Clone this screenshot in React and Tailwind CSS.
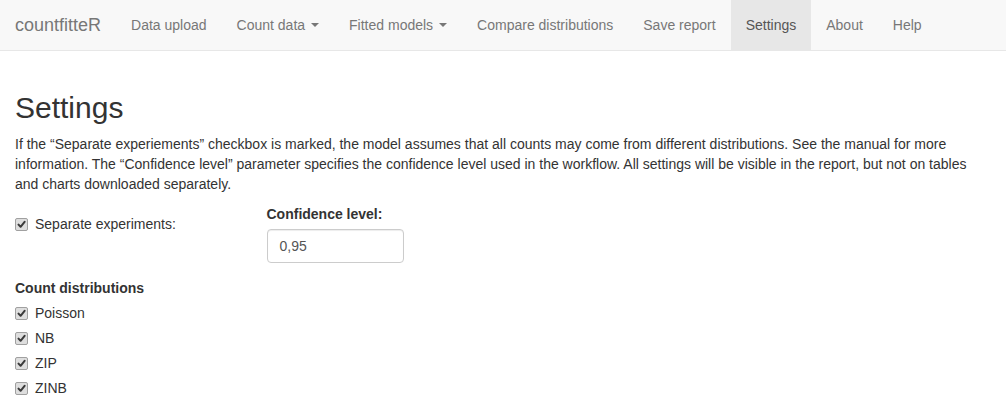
import React from "react";

function Caret() {
  return (
    <span className="ml-[6px] inline-block align-middle w-0 h-0 border-t-[4px] border-t-[#777] border-l-[4px] border-l-transparent border-r-[4px] border-r-transparent" />
  );
}

function Check() {
  return (
    <span className="relative inline-flex items-center justify-center w-[13px] h-[13px] rounded-[2px] border border-[#a0a0a0] bg-[#dedede] shrink-0">
      <svg width="9" height="9" viewBox="0 0 9 9">
        <path d="M1.5 4.6 L3.6 6.8 L7.6 1.8" fill="none" stroke="#3a3a3a" strokeWidth="2" strokeLinecap="round" strokeLinejoin="round" />
      </svg>
    </span>
  );
}

function CheckRow({ label }) {
  return (
    <div className="flex items-center h-[20px]">
      <Check />
      <span className="ml-[7px]">{label}</span>
    </div>
  );
}

export default function App() {
  const navItems = [
    { t: "Data upload" },
    { t: "Count data", caret: true },
    { t: "Fitted models", caret: true },
    { t: "Compare distributions" },
    { t: "Save report" },
    { t: "Settings", active: true },
    { t: "About" },
    { t: "Help" },
  ];
  return (
    <div
      className="w-[1006px] min-h-[408px] bg-white text-[#333] text-[14px] leading-[20px]"
      style={{ fontFamily: '"Liberation Sans", Arial, sans-serif' }}
    >
      <nav className="h-[51px] bg-[#f8f8f8] border-b border-[#e7e7e7] flex">
        <div className="px-[15px] py-[15px] text-[18px] leading-[20px] text-[#777]">countfitteR</div>
        <ul className="flex">
          {navItems.map((n) => (
            <li
              key={n.t}
              className={
                "px-[15px] py-[15px] flex items-center h-[50px] " +
                (n.active ? "bg-[#e7e7e7] text-[#555]" : "text-[#777]")
              }
            >
              {n.t}
              {n.caret && <Caret />}
            </li>
          ))}
        </ul>
      </nav>

      <div className="px-[15px] pt-[20px]">
        <h2 className="mt-[20px] mb-[10px] text-[30px] leading-[33px] font-normal">Settings</h2>
        <p className="mb-[10px]">
          If the “Separate experiements” checkbox is marked, the model assumes that all counts may come from different
          distributions. See the manual for more information. The “Confidence level” parameter specifies the confidence
          level used in the workflow. All settings will be visible in the report, but not on tables and charts
          downloaded separately.
        </p>

        <div className="flex">
          <div className="w-[251.5px] pt-[10px]">
            <CheckRow label="Separate experiments:" />
          </div>
          <div className="flex flex-col">
            <label className="font-bold mb-[5px]">Confidence level:</label>
            <div className="w-[137px] h-[34px] border border-[#ccc] rounded-[4px] px-[12px] py-[6px] shadow-[inset_0_1px_1px_rgba(0,0,0,0.075)] text-[#555] flex items-center">
              0,95
            </div>
          </div>
        </div>

        <div className="mt-[15px]">
          <div className="font-bold mb-[5px]">Count distributions</div>
          <div className="flex flex-col gap-[5px]">
            <CheckRow label="Poisson" />
            <CheckRow label="NB" />
            <CheckRow label="ZIP" />
            <CheckRow label="ZINB" />
          </div>
        </div>
      </div>
    </div>
  );
}
